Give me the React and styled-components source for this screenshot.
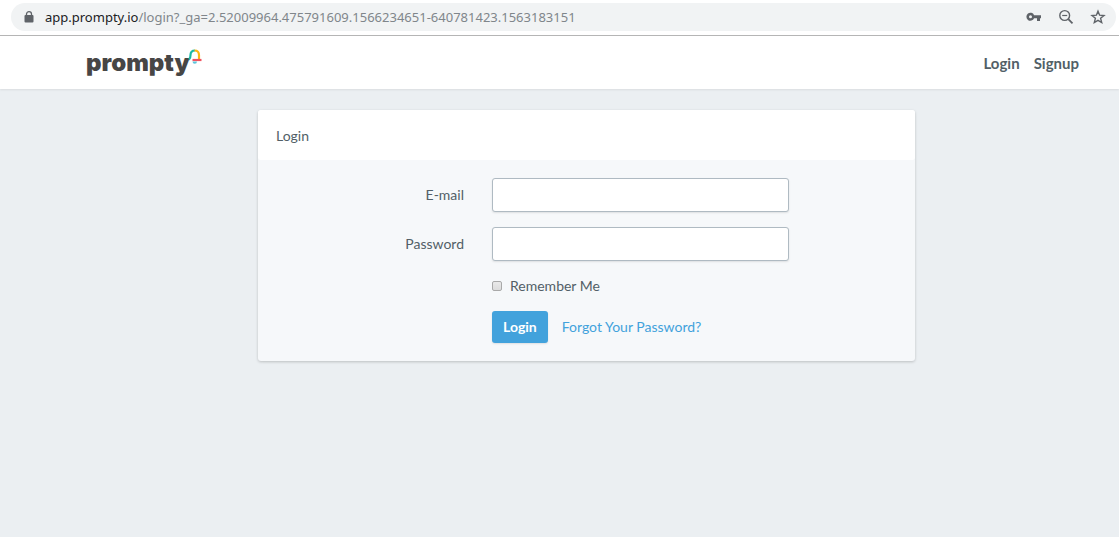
import React, { useState } from "react";
import styled, { createGlobalStyle } from "styled-components";

const COLORS = {
  page: "#ebeff2",
  panel: "#f6f8fa",
  text: "#525f67",
  primary: "#42a2dc",
  inputBorder: "#afbac2",
  icon: "#5f6368",
};

const App = () => {
  const [remember, setRemember] = useState(false);

  return (
    <>
      <GlobalStyle />
      <BrowserBar>
        <AddressField>
          <LockIcon />
          <Url>
            <span>app.prompty.io</span>
            /login?_ga=2.52009964.475791609.1566234651-640781423.1563183151
          </Url>
          <BarIcons>
            <KeyIcon />
            <ZoomOutIcon />
            <StarIcon />
          </BarIcons>
        </AddressField>
      </BrowserBar>

      <Navbar>
        <Brand href="#" aria-label="prompty">
          <span>prompty</span>
          <BellIcon />
        </Brand>
        <NavLinks>
          <NavLink href="#login">Login</NavLink>
          <NavLink href="#signup">Signup</NavLink>
        </NavLinks>
      </Navbar>

      <Main>
        <Panel>
          <PanelHeading>Login</PanelHeading>
          <LoginForm onSubmit={(e) => e.preventDefault()}>
            <Label htmlFor="email">E-mail</Label>
            <Input id="email" type="email" />
            <Label htmlFor="password">Password</Label>
            <Input id="password" type="password" />
            <RememberLabel>
              <Checkbox
                type="checkbox"
                checked={remember}
                onChange={() => setRemember(!remember)}
              />
              Remember Me
            </RememberLabel>
            <Actions>
              <PrimaryButton type="submit">Login</PrimaryButton>
              <ForgotLink href="#forgot">Forgot Your Password?</ForgotLink>
            </Actions>
          </LoginForm>
        </Panel>
      </Main>
    </>
  );
};

const LockIcon = () => (
  <svg width="10" height="12" viewBox="0 0 10 12" aria-hidden="true">
    <path d="M2.5 5V3a2.5 2.3 0 0 1 5 0v2" fill="none" stroke={COLORS.icon} strokeWidth="1.3" />
    <rect x="0.5" y="4" width="9" height="7.5" rx="1" fill={COLORS.icon} />
  </svg>
);

const KeyIcon = () => (
  <svg width="16" height="16" viewBox="0 0 16 16" aria-hidden="true">
    <path
      fill={COLORS.icon}
      fillRule="evenodd"
      d="M8.1 6.2H15v3h-1V12h-3V9.200H8.100A4 4 0 1 1 8.100 6.200ZM4.500 6.200a1.500 1.500 0 1 0 0 3 1.500 1.500 0 0 0 0-3Z"
    />
  </svg>
);

const ZoomOutIcon = () => (
  <svg width="16" height="16" viewBox="0 0 16 16" aria-hidden="true">
    <g fill="none" stroke={COLORS.icon} strokeWidth="1.4">
      <circle cx="6.7" cy="6.5" r="4.9" />
      <path d="M4.2 6.5h5" strokeWidth="1.2" />
      <path d="M10.3 10.1 14.5 14.3" strokeWidth="1.8" />
    </g>
  </svg>
);

const StarIcon = () => (
  <svg width="16" height="16" viewBox="0 0 16 16" aria-hidden="true">
    <path
      d="M8 2.200 9.600 6.200 14 6.500 10.600 9.300 11.700 13.600 8 11.300 4.300 13.600 5.400 9.300 2 6.500 6.400 6.200Z"
      fill="none"
      stroke={COLORS.icon}
      strokeWidth="1.4"
    />
  </svg>
);

const BellIcon = () => (
  <BellSvg width="14" height="16" viewBox="0 0 14 16" aria-hidden="true">
    <g fill="none" strokeWidth="2.2">
      <path d="M1 10.500C2.500 9.500 2.500 8 2.500 6 2.500 3 4 1.500 7 1.500" stroke="#1bb9a4" />
      <path d="M6.500 1.500C10 1.500 11 3 11 6V10.500" stroke="#fdb515" />
      <path d="M4.500 11H13.500" stroke="#f0525f" />
    </g>
    <path d="M4.500 12.500h4.500a2.200 2.200 0 0 1-4.500 0Z" fill="#5bc4dc" />
  </BellSvg>
);

export default App;

const GlobalStyle = createGlobalStyle`
  * {
    box-sizing: border-box;
  }
  body {
    margin: 0;
    min-height: 100vh;
    background: ${COLORS.page};
    color: ${COLORS.text};
    font-family: Lato, sans-serif;
    font-size: 14px;
    line-height: 20px;
  }
`;

const BrowserBar = styled.div`
  padding: 3px 3px 4px 11px;
  background: white;
  border-bottom: 1px solid #b6b6b6;
`;

const AddressField = styled.div`
  display: flex;
  align-items: center;
  height: 28px;
  padding: 0 10px 0 13px;
  border-radius: 14px;
  background: #f1f3f4;
`;

const Url = styled.div`
  flex: 1;
  margin-left: 11px;
  color: #80868b;
  font-family: "Noto Sans", sans-serif;
  font-size: 13px;
  white-space: nowrap;
  span {
    color: #202124;
  }
`;

const BarIcons = styled.div`
  display: flex;
  gap: 16px;
`;

const Navbar = styled.nav`
  display: flex;
  justify-content: space-between;
  align-items: center;
  height: 53px;
  padding: 0 40px 0 86px;
  background: white;
  box-shadow: 0 1px 2px rgba(0, 0, 0, 0.08);
`;

const Brand = styled.a`
  display: flex;
  position: relative;
  color: #474645;
  font-family: Inter, Lato, sans-serif;
  font-size: 24px;
  font-weight: 900;
  line-height: 28px;
  text-decoration: none;
`;

const BellSvg = styled.svg`
  position: absolute;
  top: 0;
  left: 100%;
  margin-left: -2px;
`;

const NavLinks = styled.div`
  display: flex;
  gap: 14px;
`;

const NavLink = styled.a`
  color: ${COLORS.text};
  font-size: 15px;
  font-weight: bold;
  text-decoration: none;
`;

const Main = styled.main`
  padding: 21px 0 21px 54px;
`;

const Panel = styled.section`
  max-width: 657px;
  margin: 0 auto;
  border-radius: 3px;
  background: ${COLORS.panel};
  box-shadow: 0 1px 3px rgba(0, 0, 0, 0.2);
`;

const PanelHeading = styled.div`
  padding: 16px 18px 14px;
  border-radius: 3px;
  background: white;
`;

const LoginForm = styled.form`
  display: grid;
  grid-template-columns: 206px minmax(0, 297px);
  gap: 15px 28px;
  align-items: center;
  padding: 18px 0;
`;

const Label = styled.label`
  text-align: right;
`;

const Input = styled.input`
  width: 100%;
  height: 34px;
  padding: 6px 12px;
  border: 1px solid ${COLORS.inputBorder};
  border-radius: 3px;
  background: white;
  box-shadow: 0 1px 2px rgba(0, 0, 0, 0.1);
  font: inherit;
`;

const RememberLabel = styled.label`
  display: flex;
  grid-column: 2;
  align-items: center;
  gap: 8px;
`;

const Checkbox = styled.input`
  appearance: none;
  width: 10px;
  height: 10px;
  margin: 0;
  border: 1px solid #a9a9a9;
  border-radius: 2px;
  background: linear-gradient(#e9e9e9, #dcdcdc);
  &:checked {
    background: ${COLORS.primary};
  }
`;

const Actions = styled.div`
  display: flex;
  grid-column: 2;
  align-items: center;
  gap: 14px;
`;

const PrimaryButton = styled.button`
  height: 32px;
  padding: 0 11px;
  border: 0;
  border-radius: 3px;
  background: ${COLORS.primary};
  box-shadow: 0 1px 2px rgba(0, 0, 0, 0.1);
  color: white;
  font: inherit;
  font-weight: bold;
`;

const ForgotLink = styled.a`
  color: ${COLORS.primary};
  text-decoration: none;
`;
